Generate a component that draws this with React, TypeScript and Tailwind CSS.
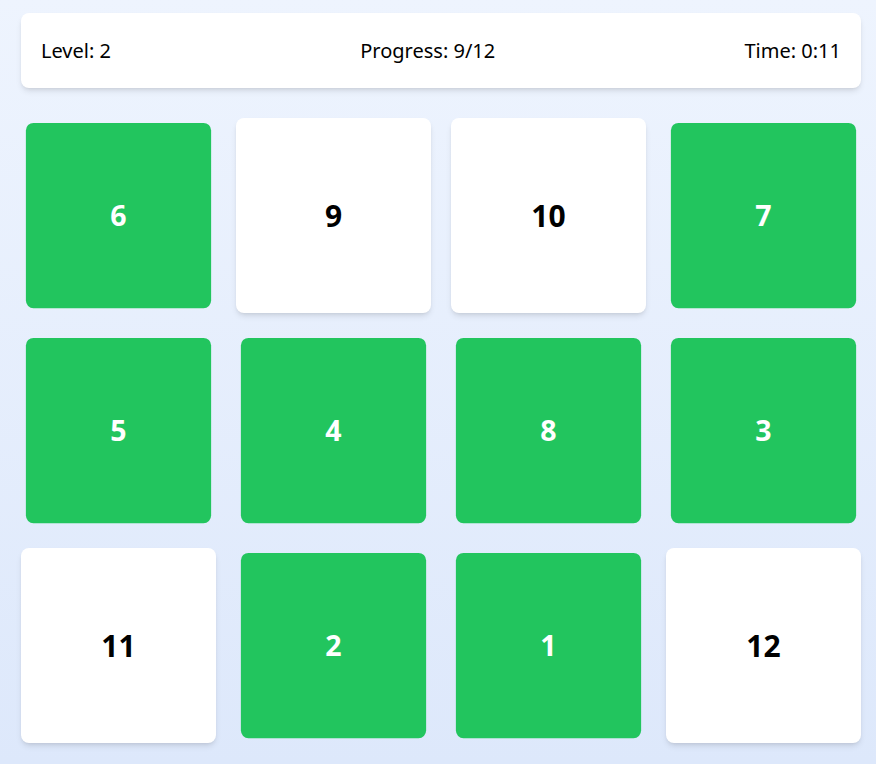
const tiles = [
  { n: 6, done: true },
  { n: 9, done: false },
  { n: 10, done: false },
  { n: 7, done: true },
  { n: 5, done: true },
  { n: 4, done: true },
  { n: 8, done: true },
  { n: 3, done: true },
  { n: 11, done: false },
  { n: 2, done: true },
  { n: 1, done: true },
  { n: 12, done: false },
];

export default function App() {
  return (
    <div
      className="min-h-[764px] w-[876px] bg-gradient-to-b from-[#eef4fe] to-[#dde8fb] pl-[21px] pt-[13px]"
      style={{ fontFamily: '"Noto Sans", "Open Sans", sans-serif' }}
    >
      <div className="w-[840px]">
        <div className="flex h-[75px] items-center justify-between rounded-lg bg-white px-5 text-xl text-black shadow-md">
          <span>Level: 2</span>
          <span>Progress: 9/12</span>
          <span>Time: 0:11</span>
        </div>

        <div className="mt-[30px] grid grid-cols-4 gap-5">
          {tiles.map((t) => (
            <div
              key={t.n}
              className={
                t.done
                  ? "flex h-[195px] scale-95 items-center justify-center rounded-lg bg-[#22c55e] text-3xl font-bold text-white"
                  : "flex h-[195px] items-center justify-center rounded-lg bg-white text-3xl font-bold text-black shadow-md"
              }
            >
              {t.n}
            </div>
          ))}
        </div>
      </div>
    </div>
  );
}
